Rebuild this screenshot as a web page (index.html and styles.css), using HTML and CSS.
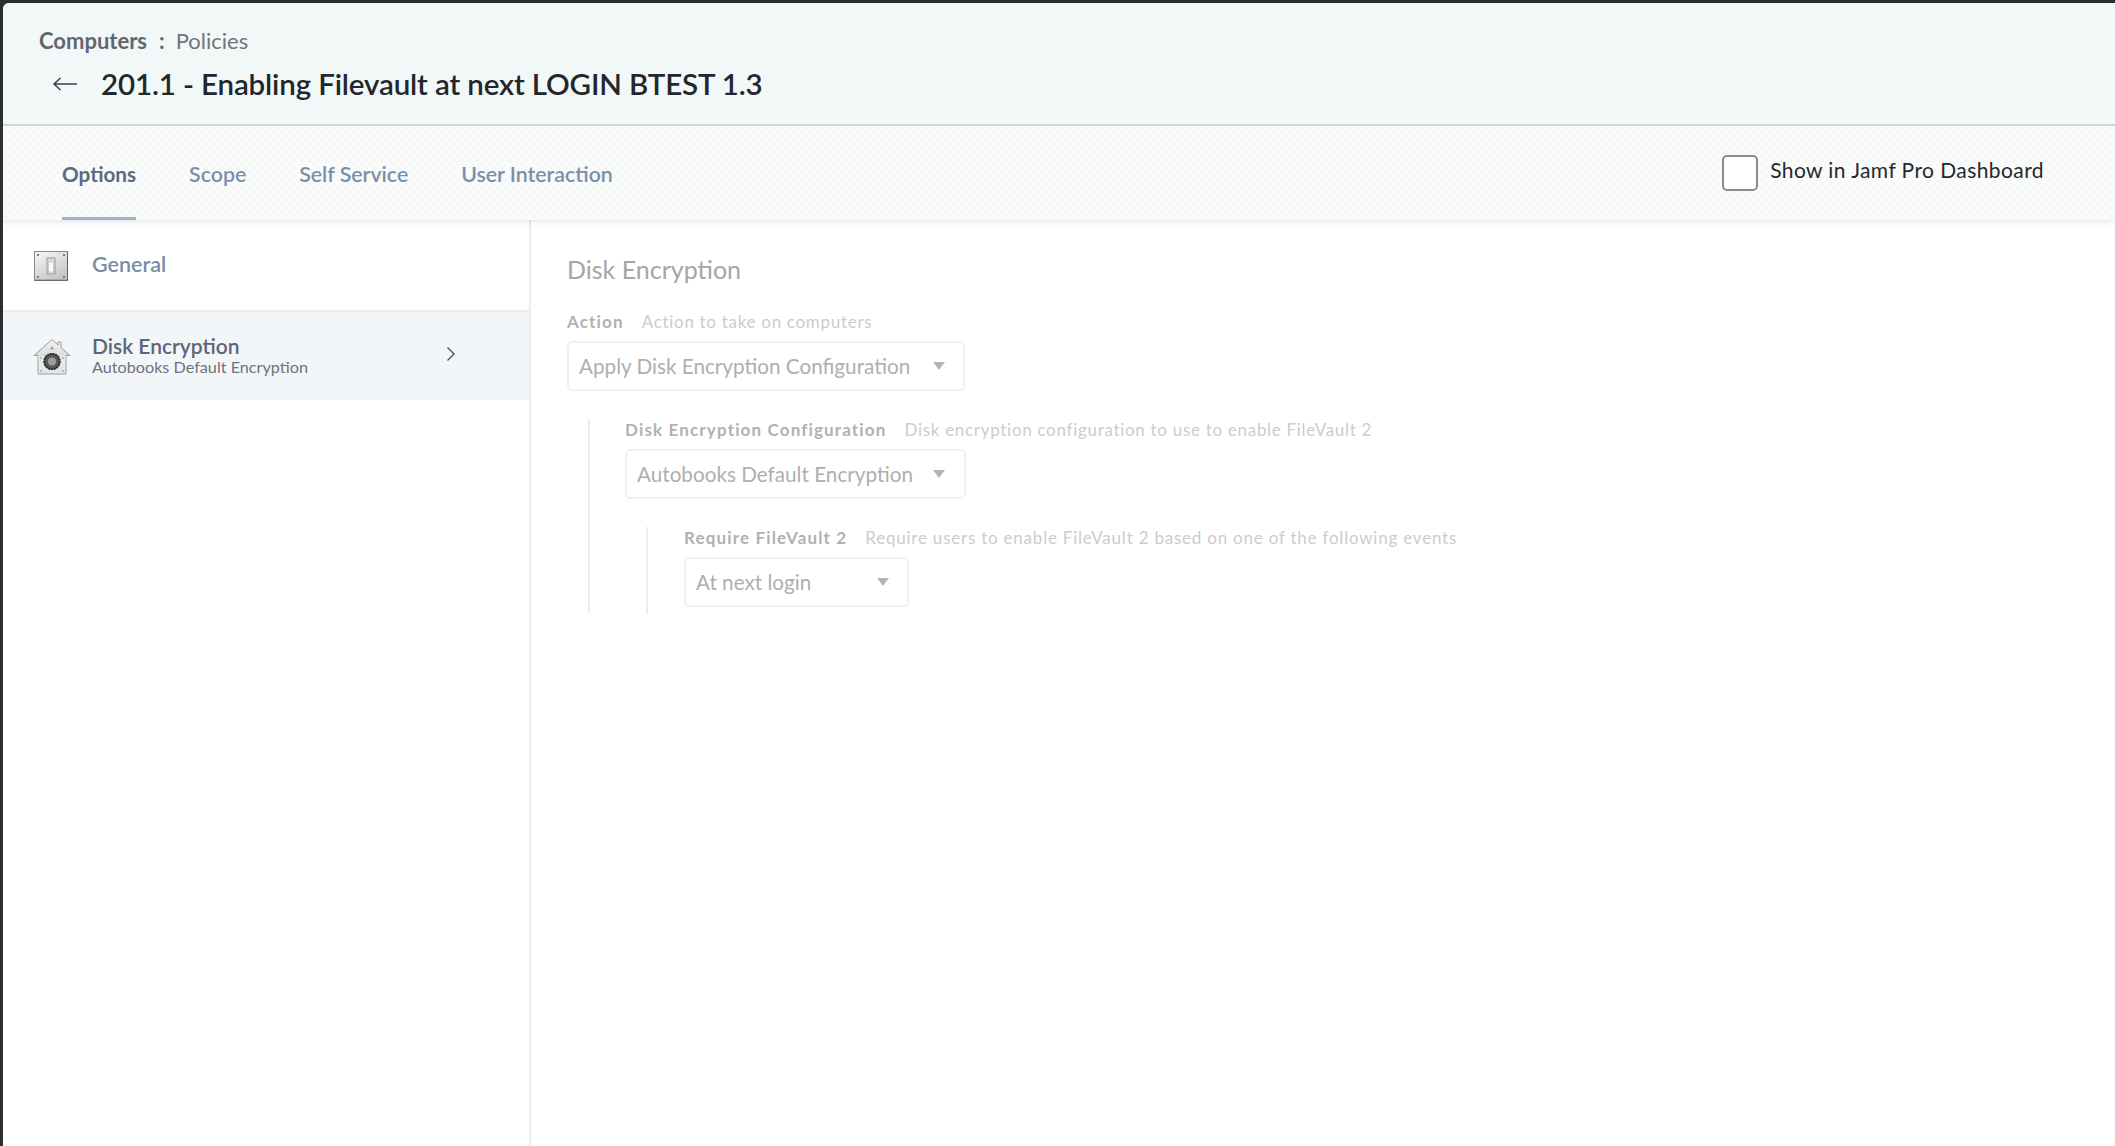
FILE: index.html
```html
<!DOCTYPE html>
<html lang="en">
<head>
<meta charset="utf-8">
<title>Policies</title>
<link rel="stylesheet" href="styles.css">
</head>
<body>
<div class="app">
  <header class="head">
    <div class="crumbs"><b>Computers</b><span class="sep">:</span><span>Policies</span></div>
    <div class="title-row">
      <svg class="back" width="26" height="16" viewBox="0 0 26 16"><path d="M25 8H2M8.5 2 2 8l6.5 6" fill="none" stroke="#3a4048" stroke-width="1.5"/></svg>
      <h1>201.1 - Enabling Filevault at next LOGIN BTEST 1.3</h1>
    </div>
  </header>
  <nav class="tabs">
    <div class="tablist">
      <a class="tab active">Options</a>
      <a class="tab">Scope</a>
      <a class="tab">Self Service</a>
      <a class="tab">User Interaction</a>
    </div>
    <label class="dash"><span class="check"></span><span>Show in Jamf Pro Dashboard</span></label>
  </nav>
  <div class="main">
    <aside class="side">
      <div class="item">
        <svg class="ico" width="36" height="30" viewBox="0 0 36 30">
          <defs><linearGradient id="plate" x1="0" y1="0" x2=".6" y2="1"><stop offset="0" stop-color="#f8f8f8"/><stop offset="1" stop-color="#c6c6c6"/></linearGradient></defs>
          <rect x=".5" y=".5" width="33" height="29" fill="url(#plate)" stroke="#85878a"/>
          <path d="M1 29.2H33.5V1" fill="none" stroke="#5f6164" stroke-width="1"/>
          <rect x="13" y="7" width="8" height="16" fill="#dcdcdc" stroke="#9a9a9a"/>
          <rect x="14.5" y="11" width="5" height="10" fill="#fbfbfb" stroke="#b5b5b5" stroke-width=".6"/>
          <g fill="#666"><circle cx="4" cy="4" r="1.1"/><circle cx="30" cy="4" r="1.1"/><circle cx="4" cy="26" r="1.1"/><circle cx="30" cy="26" r="1.1"/></g>
        </svg>
        <div class="item-text"><div class="item-name">General</div></div>
      </div>
      <div class="item selected">
        <svg class="ico house" width="38" height="38" viewBox="0 0 38 38">
          <defs><linearGradient id="roof" x1="0" y1="0" x2="0" y2="1"><stop offset="0" stop-color="#f4f4f4"/><stop offset="1" stop-color="#bfc1c3"/></linearGradient></defs>
          <path d="M5 17.5V36H33V17.5H37L28 9.5V4H25V7L19 1.5 1 17.5Z" fill="url(#roof)" stroke="#85888b" stroke-width=".8"/>
          <path d="M5.5 18H32.5V35.5H5.5Z" fill="#ecedee" opacity=".8"/>
          <circle cx="19" cy="23.5" r="8.6" fill="#565a5d"/>
          <circle cx="19" cy="23.5" r="7.6" fill="none" stroke="#26282b" stroke-width="2" stroke-dasharray="1.6 1.2"/>
          <circle cx="19" cy="23.5" r="4" fill="#9c9ea0"/>
          <path d="m19 8 2.4 3.4h-4.8z" fill="#a4a6a8"/>
          <g fill="#7b7d80"><circle cx="8" cy="33" r=".8"/><circle cx="30" cy="33" r=".8"/><circle cx="8" cy="20" r=".8"/><circle cx="30" cy="20" r=".8"/></g>
        </svg>
        <div class="item-text"><div class="item-name dark">Disk Encryption</div><div class="item-sub">Autobooks Default Encryption</div></div>
        <svg class="chev" width="10" height="16" viewBox="0 0 10 16"><path d="m1.5 1.5 6.5 6.5-6.5 6.5" fill="none" stroke="#4a515c" stroke-width="1.4"/></svg>
      </div>
    </aside>
    <section class="content">
      <h2>Disk Encryption</h2>
      <div class="field">
        <div class="label"><b>Action</b><span>Action to take on computers</span></div>
        <div class="select s1"><span>Apply Disk Encryption Configuration</span><i class="caret"></i></div>
      </div>
      <div class="nest n1">
        <div class="field">
          <div class="label"><b>Disk Encryption Configuration</b><span>Disk encryption configuration to use to enable FileVault 2</span></div>
          <div class="select s2"><span>Autobooks Default Encryption</span><i class="caret"></i></div>
        </div>
        <div class="nest n2">
          <div class="field">
            <div class="label"><b>Require FileVault 2</b><span class="wide">Require users to enable FileVault 2 based on one of the following events</span></div>
            <div class="select s3"><span>At next login</span><i class="caret"></i></div>
          </div>
        </div>
      </div>
    </section>
  </div>
</div>
</body>
</html>
```

FILE: styles.css
```css
* { box-sizing: border-box; }
html, body { margin: 0; height: 100%; overflow: hidden; }
body { background: #2e2e2f; font-family: Lato, "Liberation Sans", sans-serif; color: #22262b; }
.app { margin: 3px 0 0 3px; height: 1143px; background: #fff; border-top-left-radius: 6px; display: flex; flex-direction: column; overflow: hidden; }

.head { height: 123px; background: #f2f7f8; border-bottom: 2px solid #d3dadc; padding: 24px 0 0 36px; flex: none; }
.crumbs { display: flex; align-items: center; font-size: 22px; line-height: 28px; color: #71757a; }
.crumbs b { font-weight: 700; color: #62676d; }
.sep { margin: 0 11px 0 12px; font-weight: 700; color: #62676d; }
.title-row { display: flex; align-items: center; margin-top: 9px; }
.back { margin-left: 13px; flex: none; }
h1 { margin: 0 0 0 23px; font-size: 29.5px; line-height: 40px; font-weight: 600; color: #23272c; letter-spacing: -.14px; white-space: nowrap; }

.tabs { height: 94px; flex: none; display: flex; justify-content: space-between; background-color: #fafbfb; background-image: radial-gradient(circle at 3px 3px, #f5f6f6 1.5px, transparent 2px), radial-gradient(circle at 7px 7px, #f6f7f7 1.5px, transparent 2px); background-size: 8px 8px; box-shadow: 0 2px 6px rgba(60, 70, 80, .14); position: relative; z-index: 1; padding: 0 0 0 59px; }
.tablist { display: flex; gap: 53px; }
.tab { display: flex; align-items: center; height: 94px; font-size: 21.3px; font-weight: 600; color: #7b8fa9; border-bottom: 3px solid transparent; padding-top: 5px; }
.tab.active { color: #5b6a80; font-weight: 700; font-size: 20.7px; border-bottom-color: #9db3cd; }
.dash { display: flex; align-items: center; margin: 29px 71px 0 0; height: 36px; font-size: 21px; color: #24282d; letter-spacing: .42px; gap: 12px; }
.dash span:last-child { position: relative; top: -4px; }
.check { width: 36px; height: 36px; border: 2px solid #868b8f; border-radius: 5px; background: #fff; }

.main { flex: 1; display: flex; min-height: 0; }
.side { width: 528px; flex: none; border-right: 2px solid #e9edef; padding-top: 2px; }
.item { height: 88px; display: flex; align-items: center; padding-left: 30px; position: relative; }
.item + .item { border-top: 2px solid #e8ecee; height: 90px; }
.item.selected { background: #f2f6f8; }
.ico { margin-left: 1px; width: 36px; flex: none; }
.house { margin-left: 0; width: 38px; position: relative; top: 1px; }
.item-text { margin-left: 22px; position: relative; top: -2px; }
.item.selected .item-text { margin-left: 21px; }
.item-name { font-size: 21.5px; line-height: 24px; font-weight: 600; color: #7b8da6; }
.item-name.dark { font-size: 21px; color: #5c6679; }
.item-sub { font-size: 16.2px; line-height: 17px; color: #6d737c; }
.chev { position: absolute; left: 443px; top: 34px; }

.content { flex: 1; padding: 32px 0 0 36px; color: #bbb; }
h2 { margin: 0; font-size: 25px; line-height: 34px; font-weight: 400; color: #a4a6a8; }
.field { display: flex; flex-direction: column; }
.label { display: flex; font-size: 17px; line-height: 22px; color: #cbcccd; letter-spacing: .7px; white-space: nowrap; }
.label b { color: #b0b1b3; font-weight: 700; margin-right: 18px; letter-spacing: 1.15px; }
.label .wide { letter-spacing: .78px; }
.content > .field { margin-top: 25px; }
.select { height: 50px; margin-top: 8px; border: 2px solid #eff0f1; border-radius: 5px; background: #fff; display: flex; align-items: center; justify-content: space-between; padding: 0 19px 0 10px; font-size: 20.7px; color: #adafb1; white-space: nowrap; }
.s1 { width: 398px; padding-right: 18px; }
.s2 { width: 341px; }
.s3 { width: 225px; padding-right: 18px; }
.caret { width: 0; height: 0; border-left: 6px solid transparent; border-right: 6px solid transparent; border-top: 8px solid #b2b5b8; }
.nest { border-left: 2px solid #eceef0; margin-left: 21px; padding-left: 35px; }
.n1 { margin-top: 28px; }
.n2 { margin-top: 28px; margin-left: 21px; padding-left: 36px; padding-bottom: 7px; }
```
